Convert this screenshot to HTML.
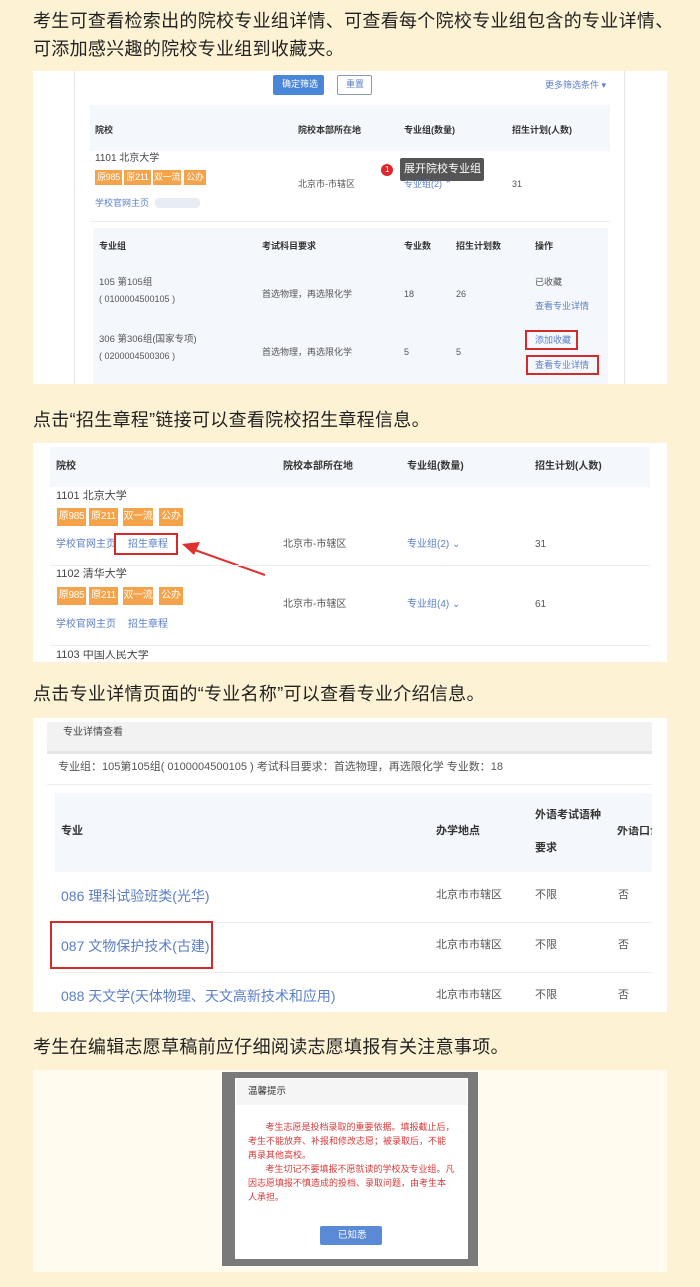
<!DOCTYPE html>
<html><head><meta charset="utf-8"><style>
*{margin:0;padding:0;box-sizing:border-box}
body{width:700px;height:1287px;background:#fdf3d4;position:relative;overflow:hidden;font-family:"Liberation Sans","Noto Sans CJK SC",sans-serif;color:#333}
.a{position:absolute;white-space:nowrap;line-height:1}
.t{font-size:18px;color:#222;letter-spacing:.3px}
.p{position:absolute;background:#fff}
.s{font-size:9px;color:#555}
.h{font-size:9px;color:#333;font-weight:bold}
.l{color:#5b7fc7}
.tag{position:absolute;background:#f5a34a;color:#fff;font-size:9px;line-height:15px;height:15px;text-align:center;letter-spacing:-.3px}
.tag2{position:absolute;background:#f5a34a;color:#fff;font-size:10px;line-height:18px;height:18px;text-align:center;letter-spacing:-.3px}
.m{font-size:10px;color:#555}
</style></head><body>
<div class="a t" style="left:33px;top:12px">考生可查看检索出的院校专业组详情、可查看每个院校专业组包含的专业详情、</div>
<div class="a t" style="left:33px;top:40px">可添加感兴趣的院校专业组到收藏夹。</div>

<!-- panel 1 -->
<div class="p" style="left:33px;top:71px;width:634px;height:313px"></div>
<div class="p" style="left:74px;top:71px;width:1px;height:313px;background:#e6e6e6"></div>
<div class="p" style="left:624px;top:71px;width:1px;height:313px;background:#e6e6e6"></div>
<div class="p" style="left:273px;top:75px;width:51px;height:20px;background:#4a86d8;border-radius:2px"></div>
<div class="a" style="left:282px;top:80px;font-size:9px;color:#fff">确定筛选</div>
<div class="p" style="left:337px;top:75px;width:35px;height:20px;border:1px solid #8a9ab0;border-radius:2px"></div>
<div class="a" style="left:346px;top:80px;font-size:9px;color:#5b7fc7">重置</div>
<div class="a l" style="left:545px;top:81px;font-size:9px">更多筛选条件 ▾</div>
<div class="p" style="left:90px;top:105px;width:520px;height:46px;background:#f4f7fb"></div>
<div class="a h" style="left:95px;top:126px">院校</div>
<div class="a h" style="left:298px;top:126px">院校本部所在地</div>
<div class="a h" style="left:404px;top:126px">专业组(数量)</div>
<div class="a h" style="left:512px;top:126px">招生计划(人数)</div>
<div class="a" style="left:95px;top:154px;font-size:10px;color:#444">1101 北京大学</div>
<div class="tag" style="left:95px;top:170px;width:27px">原985</div>
<div class="tag" style="left:124px;top:170px;width:27px">原211</div>
<div class="tag" style="left:153px;top:170px;width:28px">双一流</div>
<div class="tag" style="left:184px;top:170px;width:22px">公办</div>
<div class="a l s" style="left:95px;top:199px;color:#5b7fc7">学校官网主页</div>
<div class="p" style="left:155px;top:198px;width:45px;height:10px;background:#e8ecf3;border-radius:4px"></div>
<div class="a s" style="left:298px;top:180px">北京市-市辖区</div>
<div class="p" style="left:400px;top:158px;width:84px;height:23px;background:#555;border-radius:2px"></div>
<div class="a" style="left:404px;top:164px;font-size:11px;color:#fff">展开院校专业组</div>
<div class="p" style="left:381px;top:164px;width:12px;height:12px;background:#e0262b;border-radius:50%"></div>
<div class="a" style="left:385px;top:166px;font-size:8px;color:#fff">1</div>
<div class="a s" style="left:404px;top:180px;color:#5b7fc7">专业组(2) ⌃</div>
<div class="a s" style="left:512px;top:180px">31</div>
<div class="p" style="left:90px;top:221px;width:520px;height:1px;background:#eee"></div>
<div class="p" style="left:93px;top:228px;width:515px;height:156px;background:#f4f7fb"></div>
<div class="a h" style="left:99px;top:242px">专业组</div>
<div class="a h" style="left:262px;top:242px">考试科目要求</div>
<div class="a h" style="left:404px;top:242px">专业数</div>
<div class="a h" style="left:456px;top:242px">招生计划数</div>
<div class="a h" style="left:535px;top:242px">操作</div>
<div class="a m" style="left:99px;top:278px;font-size:9.5px">105 第105组</div>
<div class="a m" style="left:99px;top:295px;font-size:9px">( 0100004500105 )</div>
<div class="a s" style="left:262px;top:290px">首选物理，再选限化学</div>
<div class="a s" style="left:404px;top:290px">18</div>
<div class="a s" style="left:456px;top:290px">26</div>
<div class="a s" style="left:535px;top:278px">已收藏</div>
<div class="a s" style="left:535px;top:302px;color:#5b7fc7">查看专业详情</div>
<div class="a m" style="left:99px;top:335px;font-size:9.5px">306 第306组(国家专项)</div>
<div class="a m" style="left:99px;top:352px;font-size:9px">( 0200004500306 )</div>
<div class="a s" style="left:262px;top:348px">首选物理，再选限化学</div>
<div class="a s" style="left:404px;top:348px">5</div>
<div class="a s" style="left:456px;top:348px">5</div>
<div class="p" style="left:525px;top:330px;width:53px;height:20px;border:2px solid #d42a2a;background:transparent"></div>
<div class="a s" style="left:535px;top:336px;color:#5b7fc7">添加收藏</div>
<div class="p" style="left:526px;top:355px;width:73px;height:20px;border:2px solid #d42a2a;background:transparent"></div>
<div class="a s" style="left:535px;top:361px;color:#5b7fc7">查看专业详情</div>

<div class="a t" style="left:33px;top:411px">点击“招生章程”链接可以查看院校招生章程信息。</div>

<!-- panel 2 -->
<div class="p" style="left:33px;top:443px;width:634px;height:219px"></div>
<div class="p" style="left:50px;top:447px;width:600px;height:40px;background:#f4f7fb"></div>
<div class="a h" style="left:56px;top:462px;font-size:10px">院校</div>
<div class="a h" style="left:283px;top:462px;font-size:10px">院校本部所在地</div>
<div class="a h" style="left:407px;top:462px;font-size:10px">专业组(数量)</div>
<div class="a h" style="left:535px;top:462px;font-size:10px">招生计划(人数)</div>
<div class="a" style="left:56px;top:491px;font-size:11px;color:#444">1101 北京大学</div>
<div class="tag2" style="left:57px;top:508px;width:29px">原985</div>
<div class="tag2" style="left:89px;top:508px;width:29px">原211</div>
<div class="tag2" style="left:123px;top:508px;width:30px">双一流</div>
<div class="tag2" style="left:159px;top:508px;width:24px">公办</div>
<div class="a" style="left:56px;top:540px;font-size:10px;color:#5b7fc7">学校官网主页</div>
<div class="a" style="left:128px;top:540px;font-size:10px;color:#5b7fc7">招生章程</div>
<div class="p" style="left:114px;top:533px;width:64px;height:22px;border:2px solid #d42a2a;background:transparent"></div>
<svg class="a" style="left:170px;top:535px" width="100" height="45"><path d="M95 40 L22 14" stroke="#e03030" stroke-width="2"/><path d="M12 9 L30 7 L24 20 Z" fill="#e03030"/></svg>
<div class="a m" style="left:283px;top:540px">北京市-市辖区</div>
<div class="a m" style="left:407px;top:540px;color:#5b7fc7">专业组(2) ⌄</div>
<div class="a m" style="left:535px;top:540px">31</div>
<div class="p" style="left:50px;top:565px;width:600px;height:1px;background:#eee"></div>
<div class="a" style="left:56px;top:569px;font-size:11px;color:#444">1102 清华大学</div>
<div class="tag2" style="left:57px;top:587px;width:29px">原985</div>
<div class="tag2" style="left:89px;top:587px;width:29px">原211</div>
<div class="tag2" style="left:123px;top:587px;width:30px">双一流</div>
<div class="tag2" style="left:159px;top:587px;width:24px">公办</div>
<div class="a" style="left:56px;top:620px;font-size:10px;color:#5b7fc7">学校官网主页</div>
<div class="a" style="left:128px;top:620px;font-size:10px;color:#5b7fc7">招生章程</div>
<div class="a m" style="left:283px;top:600px">北京市-市辖区</div>
<div class="a m" style="left:407px;top:600px;color:#5b7fc7">专业组(4) ⌄</div>
<div class="a m" style="left:535px;top:600px">61</div>
<div class="p" style="left:50px;top:645px;width:600px;height:1px;background:#eee"></div>
<div class="a" style="left:56px;top:650px;font-size:11px;color:#444;height:12px;overflow:hidden">1103 中国人民大学</div>

<div class="a t" style="left:33px;top:685px">点击专业详情页面的“专业名称”可以查看专业介绍信息。</div>

<!-- panel 3 -->
<div class="p" style="left:33px;top:718px;width:634px;height:294px"></div>
<div class="p" style="left:47px;top:722px;width:605px;height:32px;background:#f2f2f2;border-bottom:3px solid #e6e6e6"></div>
<div class="a" style="left:63px;top:728px;font-size:10px;color:#444">专业详情查看</div>
<div class="a" style="left:58px;top:762px;font-size:11px;color:#555">专业组：105第105组( 0100004500105 )  考试科目要求：首选物理，再选限化学  专业数：18</div>
<div class="p" style="left:47px;top:784px;width:605px;height:1px;background:#eee"></div>
<div class="p" style="left:55px;top:793px;width:597px;height:79px;background:#f4f7fb"></div>
<div class="a h" style="left:61px;top:826px;font-size:11px">专业</div>
<div class="a h" style="left:436px;top:826px;font-size:11px">办学地点</div>
<div class="a h" style="left:535px;top:810px;font-size:11px">外语考试语种</div>
<div class="a h" style="left:535px;top:843px;font-size:11px">要求</div>
<div class="a h" style="left:617px;top:826px;font-size:11px;width:35px;overflow:hidden">外语口试</div>
<div class="a" style="left:61px;top:889px;font-size:14px;color:#5b7fc7">086 理科试验班类(光华)</div>
<div class="a" style="left:61px;top:939px;font-size:14px;color:#5b7fc7">087 文物保护技术(古建)</div>
<div class="a" style="left:61px;top:989px;font-size:14px;color:#5b7fc7">088 天文学(天体物理、天文高新技术和应用)</div>
<div class="p" style="left:55px;top:922px;width:597px;height:1px;background:#eee"></div>
<div class="p" style="left:55px;top:972px;width:597px;height:1px;background:#eee"></div>
<div class="p" style="left:50px;top:921px;width:163px;height:48px;border:2px solid #d42a2a;background:transparent"></div>
<div class="a m" style="left:436px;top:890px;font-size:11px">北京市市辖区</div>
<div class="a m" style="left:436px;top:940px;font-size:11px">北京市市辖区</div>
<div class="a m" style="left:436px;top:990px;font-size:11px">北京市市辖区</div>
<div class="a m" style="left:535px;top:890px;font-size:11px">不限</div>
<div class="a m" style="left:535px;top:940px;font-size:11px">不限</div>
<div class="a m" style="left:535px;top:990px;font-size:11px">不限</div>
<div class="a m" style="left:618px;top:890px;font-size:11px">否</div>
<div class="a m" style="left:618px;top:940px;font-size:11px">否</div>
<div class="a m" style="left:618px;top:990px;font-size:11px">否</div>

<div class="a t" style="left:33px;top:1038px">考生在编辑志愿草稿前应仔细阅读志愿填报有关注意事项。</div>

<!-- panel 4 -->
<div class="p" style="left:33px;top:1070px;width:634px;height:202px;background:#fffbee"></div>
<div class="p" style="left:222px;top:1072px;width:256px;height:194px;background:#7a7a7a"></div>
<div class="p" style="left:235px;top:1078px;width:233px;height:181px;background:#fff"></div>
<div class="p" style="left:236px;top:1079px;width:231px;height:26px;background:#f5f5f5"></div>
<div class="a" style="left:248px;top:1087px;font-size:9.5px;color:#333">温馨提示</div>
<div class="a" style="left:248px;top:1120px;font-size:9px;color:#d83a3a;line-height:14px;white-space:normal;width:210px">&nbsp;&nbsp;&nbsp;&nbsp;&nbsp;&nbsp;&nbsp;考生志愿是投档录取的重要依据。填报截止后，<br>考生不能放弃、补报和修改志愿；被录取后，不能<br>再录其他高校。<br>&nbsp;&nbsp;&nbsp;&nbsp;&nbsp;&nbsp;&nbsp;考生切记不要填报不愿就读的学校及专业组。凡<br>因志愿填报不慎造成的投档、录取问题，由考生本<br>人承担。</div>
<div class="p" style="left:320px;top:1226px;width:62px;height:19px;background:#5a8ad6;border-radius:2px"></div>
<div class="a" style="left:338px;top:1231px;font-size:9.5px;color:#fff">已知悉</div>
</body></html>
